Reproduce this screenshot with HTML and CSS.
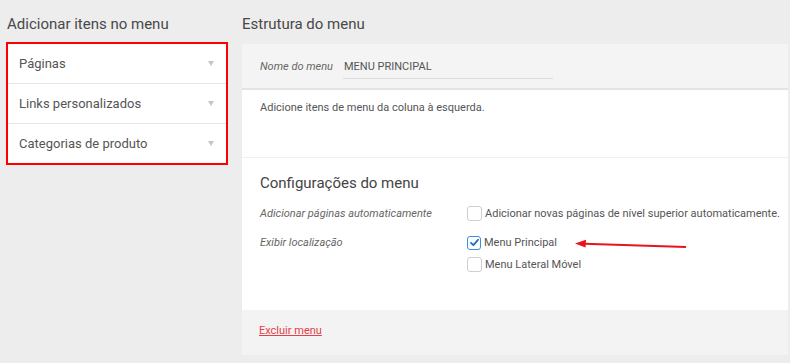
FILE: index.html
```html
<!DOCTYPE html>
<html lang="pt-BR">
<head>
  <meta charset="UTF-8">
  <title>Menus</title>
  <link rel="stylesheet" href="styles.css">
</head>
<body>
  <div class="page">
    <div class="left-col">
      <h2 class="col-title">Adicionar itens no menu</h2>
      <div class="accordion">
        <div class="acc-item">Páginas <span class="caret"></span></div>
        <div class="acc-item">Links personalizados <span class="caret"></span></div>
        <div class="acc-item">Categorias de produto <span class="caret"></span></div>
      </div>
    </div>
    <div class="right-col">
      <h2 class="col-title">Estrutura do menu</h2>
      <div class="panel">
        <div class="panel-head">
          <span class="field-label">Nome do menu</span>
          <span class="name-input">MENU PRINCIPAL</span>
        </div>
        <div class="panel-intro">Adicione itens de menu da coluna à esquerda.</div>
        <div class="panel-settings">
          <h3 class="settings-title">Configurações do menu</h3>
          <div class="setting-row">
            <div class="field-label">Adicionar páginas automaticamente</div>
            <div class="options">
              <label class="check"><span class="box"></span>Adicionar novas páginas de nível superior automaticamente.</label>
            </div>
          </div>
          <div class="setting-row">
            <div class="field-label">Exibir localização</div>
            <div class="options">
              <label class="check"><span class="box checked">
                <svg width="11" height="11" viewBox="0 0 11 11"><path d="M2 5.8 L4.4 8.2 L9 2.8" fill="none" stroke="#1f6fc4" stroke-width="1.8" stroke-linecap="round" stroke-linejoin="round"/></svg>
              </span>Menu Principal</label>
              <label class="check"><span class="box"></span>Menu Lateral Móvel</label>
            </div>
          </div>
        </div>
        <div class="panel-foot">
          <a class="delete-link" href="#">Excluir menu</a>
        </div>
      </div>
    </div>
  </div>
  <!-- annotation arrow drawn over the screenshot -->
  <svg class="annot-arrow" width="130" height="14" viewBox="0 0 130 14">
    <path d="M114 10 L12 6.8" stroke="#e8141c" stroke-width="2" fill="none"/>
    <path d="M3 6.4 L14 2.8 L13.5 10.6 Z" fill="#e8141c"/>
  </svg>
</body>
</html>
```

FILE: styles.css
```css
body {
  margin: 0;
  background-color: #ededed;
  font-family: Roboto, "Liberation Sans", Arial, sans-serif;
  color: #555;
  position: relative;
}
.page {
  display: flex;
  gap: 14px;
  padding: 0 2px 0 6px;
}
.left-col {
  width: 222px;
  flex-shrink: 0;
}
.right-col {
  flex: 1;
  min-width: 0;
}
.col-title {
  font-size: 15px;
  font-weight: 400;
  line-height: 20px;
  color: #484848;
  margin: 14px 0 8px 1px;
}
.right-col .col-title {
  margin: 14px 0 10px 0;
}
.accordion {
  border: 2px solid #f00;
  background: #fff;
}
.acc-item {
  height: 39px;
  display: flex;
  align-items: center;
  justify-content: space-between;
  padding: 0 12px 0 11px;
  font-size: 13px;
  color: #555;
  border-bottom: 1px solid #e6e6e6;
}
.acc-item:last-child {
  border-bottom: none;
}
.caret {
  width: 0;
  height: 0;
  border-left: 3.5px solid transparent;
  border-right: 3.5px solid transparent;
  border-top: 5px solid #c4c4c4;
}
.panel {
  background: #fff;
}
.panel-head {
  height: 44px;
  background: #f4f4f4;
  border-bottom: 2px solid #e4e4e4;
  display: flex;
  align-items: center;
  padding: 0 18px;
}
.field-label {
  font-size: 11px;
  font-style: italic;
  color: #666;
}
.panel-head .field-label {
  margin-right: 10px;
}
.name-input {
  width: 208px;
  font-size: 11px;
  color: #555;
  padding: 5px 1px 5px;
  border-bottom: 1px solid #dcdcdc;
  margin-top: 1px;
}
.panel-intro {
  height: 57px;
  padding: 10px 18px 0;
  font-size: 11px;
  line-height: 16px;
  color: #555;
  border-bottom: 1px solid #f0f0f0;
}
.panel-settings {
  height: 137px;
  padding: 15px 0 0 18px;
}
.settings-title {
  font-size: 15px;
  font-weight: 400;
  line-height: 20px;
  color: #444;
  margin: 0 0 13px;
}
.setting-row {
  display: grid;
  grid-template-columns: 207px 1fr;
  margin-bottom: 14px;
}
.setting-row .field-label {
  line-height: 15px;
}
.options {
  display: flex;
  flex-direction: column;
  gap: 7px;
}
.check {
  display: flex;
  align-items: center;
  gap: 3px;
  font-size: 11px;
  line-height: 15px;
  color: #555;
  white-space: nowrap;
}
.box {
  width: 13px;
  height: 13px;
  border: 1px solid #cfcfcf;
  border-radius: 3px;
  background: #fff;
  display: flex;
  align-items: center;
  justify-content: center;
  flex-shrink: 0;
}
.box.checked {
  width: 12px;
  height: 12px;
  border: 1.5px solid #3a8ee0;
}
.panel-foot {
  height: 45px;
  background: #f3f3f3;
  display: flex;
  align-items: center;
  padding: 0 17px;
}
.delete-link {
  font-size: 11px;
  color: #e5404a;
  text-decoration: underline;
  margin-top: -4px;
}
.annot-arrow {
  position: absolute;
  left: 572px;
  top: 237px;
}
```
